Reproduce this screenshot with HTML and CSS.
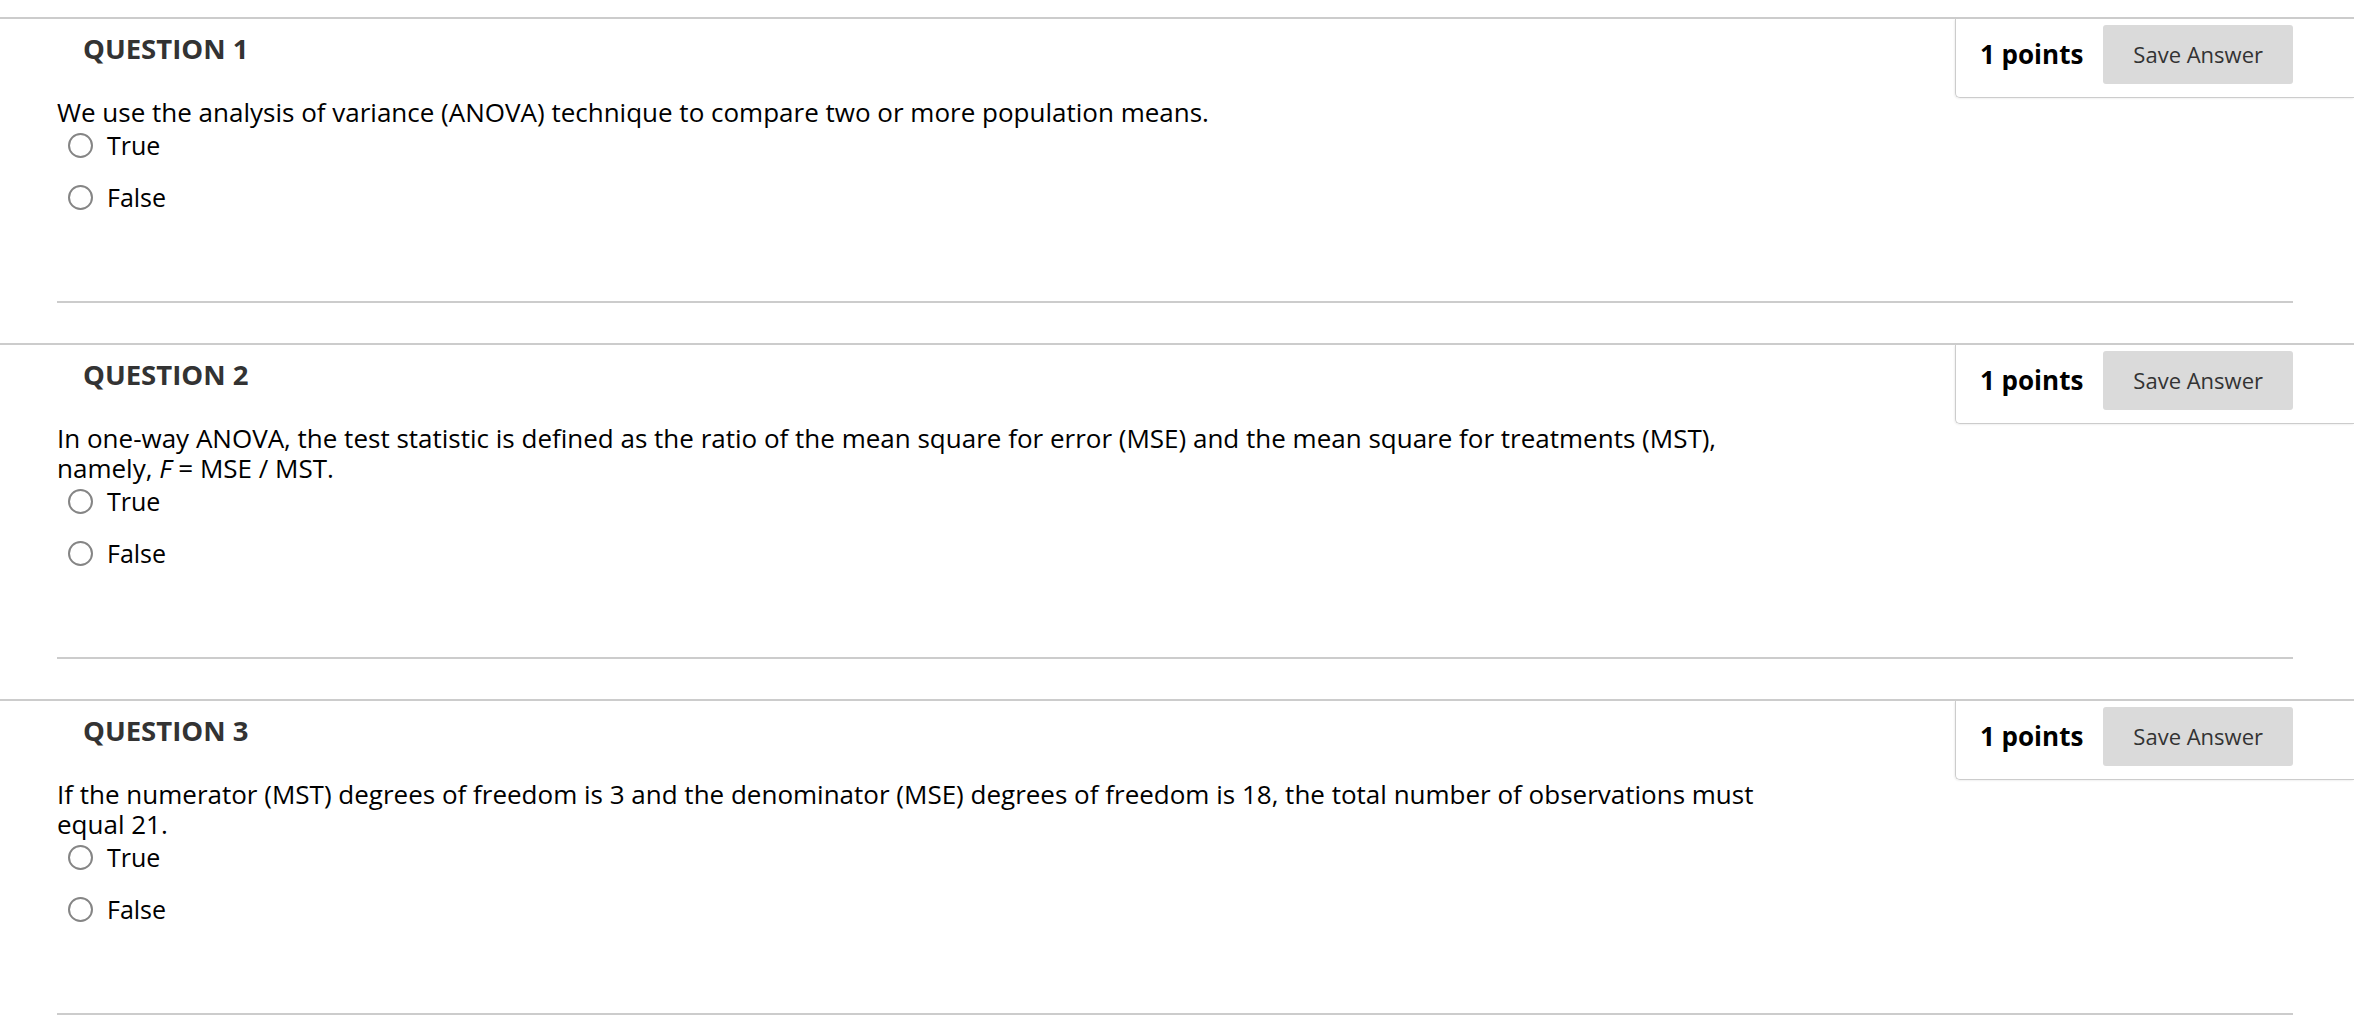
FILE: index.html
```html
<!DOCTYPE html>
<html lang="en">
<head>
<meta charset="utf-8">
<title>Questions</title>
<link rel="stylesheet" href="styles.css">
</head>
<body>
<div class="page">
  <div class="question">
    <h3 class="q-title">QUESTION 1</h3>
    <div class="points">
      <span class="points-label">1 points</span>
      <button class="save-btn" type="button">Save Answer</button>
    </div>
    <div class="q-body">
      <div class="q-text">We use the analysis of variance (ANOVA) technique to compare two or more population means.</div>
      <div class="options">
        <label class="option"><span class="radio"></span><span class="opt-text">True</span></label>
        <label class="option"><span class="radio"></span><span class="opt-text">False</span></label>
      </div>
    </div>
    <div class="sep"></div>
  </div>

  <div class="question">
    <h3 class="q-title">QUESTION 2</h3>
    <div class="points">
      <span class="points-label">1 points</span>
      <button class="save-btn" type="button">Save Answer</button>
    </div>
    <div class="q-body">
      <div class="q-text">In one-way ANOVA, the test statistic is defined as the ratio of the mean square for error (MSE) and the mean square for treatments (MST), namely, <i>F</i> = MSE / MST.</div>
      <div class="options">
        <label class="option"><span class="radio"></span><span class="opt-text">True</span></label>
        <label class="option"><span class="radio"></span><span class="opt-text">False</span></label>
      </div>
    </div>
    <div class="sep"></div>
  </div>

  <div class="question">
    <h3 class="q-title">QUESTION 3</h3>
    <div class="points">
      <span class="points-label">1 points</span>
      <button class="save-btn" type="button">Save Answer</button>
    </div>
    <div class="q-body">
      <div class="q-text">If the numerator (MST) degrees of freedom is 3 and the denominator (MSE) degrees of freedom is 18, the total number of observations must equal 21.</div>
      <div class="options">
        <label class="option"><span class="radio"></span><span class="opt-text">True</span></label>
        <label class="option"><span class="radio"></span><span class="opt-text">False</span></label>
      </div>
    </div>
    <div class="sep"></div>
  </div>
</div>
</body>
</html>
```

FILE: styles.css
```css
html, body {
  margin: 0;
  padding: 0;
  background: #ffffff;
}

body {
  font-family: "Open Sans", "Liberation Sans", sans-serif;
  color: #000;
}

.page {
  padding-top: 17px;
  width: 2354px;
}

.question {
  display: grid;
  grid-template-columns: 1fr auto;
  border-top: 2px solid #cccccc;
  margin-bottom: 40px;
}

.q-title {
  grid-column: 1;
  grid-row: 1;
  margin: 11px 0 0 83px;
  font-size: 27.5px;
  line-height: 38px;
  font-weight: 700;
  color: #333333;
}

.points {
  grid-column: 2;
  grid-row: 1 / span 2;
  align-self: start;
  display: flex;
  align-items: center;
  gap: 20px;
  padding: 6px 61px 13px 24px;
  border-left: 1px solid #cccccc;
  border-bottom: 1px solid #cccccc;
  border-bottom-left-radius: 5px;
  box-shadow: -1px 1px 2px rgba(0, 0, 0, 0.06);
}

.points-label {
  font-size: 26px;
  line-height: 33px;
  font-weight: 700;
  color: #000;
}

.save-btn {
  font-family: "Open Sans", "Liberation Sans", sans-serif;
  font-size: 22px;
  line-height: 31px;
  color: #333333;
  background: #dadada;
  border: none;
  border-radius: 3px;
  padding: 14px 30px;
  margin: 0;
}

.q-body {
  grid-column: 1;
  grid-row: 2;
  margin: 29px 0 0 57px;
}

.q-text {
  max-width: 1720px;
  font-size: 26px;
  line-height: 30px;
  color: #000;
}

.options {
  display: flex;
  flex-direction: column;
  gap: 22px;
  padding-top: 3px;
}

.option {
  display: flex;
  align-items: center;
  gap: 14px;
  height: 30px;
  padding-left: 11px;
}

.radio {
  width: 21px;
  height: 21px;
  border: 2px solid #858585;
  border-radius: 50%;
  background: #ffffff;
  flex: none;
}

.opt-text {
  font-size: 25px;
  line-height: 30px;
  color: #000;
}

.sep {
  grid-column: 1 / -1;
  grid-row: 3;
  margin: 89px 61px 0 57px;
  border-top: 2px solid #cccccc;
}
```
